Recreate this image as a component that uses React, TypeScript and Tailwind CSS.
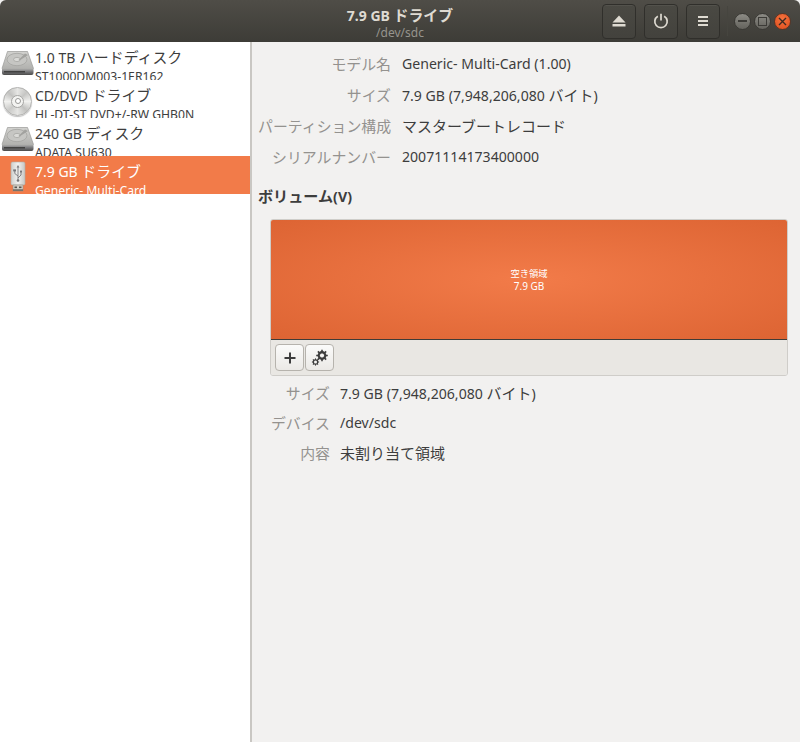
import React from "react";

const FONT = "font-['Noto_Sans','Noto_Sans_CJK_JP',sans-serif]";

function T({ text }: { text: string }) {
  const parts = text.split(/([\u3000-\u9fff]+)/);
  return (
    <>
      {parts.map((p, i) =>
        i % 2 === 1 ? (
          <span key={i} className="text-[1.065em]">
            {p}
          </span>
        ) : (
          <React.Fragment key={i}>{p}</React.Fragment>
        )
      )}
    </>
  );
}

function HddIcon() {
  return (
    <svg width="33" height="32" viewBox="0 0 33 32" className="shrink-0">
      <defs>
        <linearGradient id="hddtop" x1="0" y1="0" x2="0" y2="1">
          <stop offset="0" stopColor="#d2d2cf" />
          <stop offset="1" stopColor="#b2b2af" />
        </linearGradient>
        <linearGradient id="hddfront" x1="0" y1="0" x2="0" y2="1">
          <stop offset="0" stopColor="#b4b4b1" />
          <stop offset="0.5" stopColor="#77777a" />
          <stop offset="1" stopColor="#4a4a49" />
        </linearGradient>
      </defs>
      <path d="M6.5 4.5 H26.5 L32.5 21.5 H1 Z" fill="url(#hddtop)" stroke="#9a9a97" strokeWidth="0.7" />
      <ellipse cx="16" cy="12.5" rx="10" ry="6.2" fill="#c6c6c3" stroke="#a0a09d" strokeWidth="0.7" />
      <ellipse cx="16" cy="12.5" rx="3.4" ry="2.1" fill="#dadad7" stroke="#9a9a97" strokeWidth="0.6" />
      <path d="M24 6.5 L27 8 L18.5 13.5 L17.5 13 Z" fill="#a2a29f" />
      <path d="M1 21.5 H32.5 V26 Q32.5 28 30.5 28 H3 Q1 28 1 26 Z" fill="url(#hddfront)" />
      <rect x="3" y="24" width="21" height="1.5" fill="#2f2f2e" opacity="0.75" />
    </svg>
  );
}

function CdIcon() {
  return (
    <div className="relative w-[33px] h-8 shrink-0 flex items-center justify-center">
      <div className="w-[29px] h-[29px] rounded-full border border-[#b1b1af] bg-[conic-gradient(#e6e6e4,#c6c6c4,#f1f1ef,#c2c2c0,#e6e6e4,#cacac8,#f1f1ef,#c2c2c0,#e6e6e4)] flex items-center justify-center shadow-[0_1px_1px_rgba(0,0,0,0.25)]">
        <div className="w-[13px] h-[13px] rounded-full bg-[#f3f3f1] border border-[#a5a5a3] flex items-center justify-center">
          <div className="w-[6px] h-[6px] rounded-full bg-white border border-[#999997]" />
        </div>
      </div>
    </div>
  );
}

function UsbIcon() {
  return (
    <svg width="33" height="32" viewBox="0 0 33 32" className="shrink-0">
      <defs>
        <linearGradient id="usbbody" x1="0" y1="0" x2="1" y2="0">
          <stop offset="0" stopColor="#cfcfcc" />
          <stop offset="0.5" stopColor="#f2f2f0" />
          <stop offset="1" stopColor="#c6c6c3" />
        </linearGradient>
      </defs>
      <rect x="10" y="1" width="14" height="23" rx="1.5" fill="url(#usbbody)" stroke="#b0aeaa" strokeWidth="0.6" />
      <g stroke="#77777a" strokeWidth="0.9" fill="none">
        <path d="M17 6 V19" />
        <path d="M17 15 L13.8 12.5 V10" />
        <path d="M17 17 L20 14 V11.5" />
      </g>
      <circle cx="17" cy="19.5" r="1.3" fill="#77777a" />
      <rect x="12.2" y="8.4" width="2.8" height="2" fill="#77777a" />
      <rect x="19" y="9.6" width="2" height="2" fill="#77777a" />
      <path d="M17 4 L15.6 6.5 H18.4 Z" fill="#77777a" />
      <rect x="12" y="24" width="10" height="6" fill="#d3cfc6" stroke="#968f84" strokeWidth="0.6" />
      <rect x="13.5" y="25.5" width="2.5" height="1.6" fill="#55554f" />
      <rect x="18" y="25.5" width="2.5" height="1.6" fill="#55554f" />
      <rect x="12" y="28.2" width="10" height="1.8" fill="#77726a" />
    </svg>
  );
}

function HeaderButton({ children }: { children: React.ReactNode }) {
  return (
    <button className="w-[34px] h-[35px] rounded-[4px] border border-[#302f2b] bg-gradient-to-b from-[#4a4943] to-[#43423d] flex items-center justify-center shadow-[inset_0_1px_0_rgba(255,255,255,0.05)]">
      {children}
    </button>
  );
}

function WmButton({ children, close }: { children: React.ReactNode; close?: boolean }) {
  return (
    <div
      className={
        close
          ? "w-[17px] h-[17px] rounded-full border border-[#5a3526] bg-[radial-gradient(circle_at_50%_35%,#f5743f,#dc4b1b)] flex items-center justify-center"
          : "w-[17px] h-[17px] rounded-full border border-[#3a3935] bg-gradient-to-b from-[#8c8b85] to-[#64635d] flex items-center justify-center"
      }
    >
      {children}
    </div>
  );
}

function Header() {
  return (
    <header className="relative h-[42px] shrink-0 rounded-t-[6px] bg-gradient-to-b from-[#4f4d47] to-[#3d3c37] flex items-center justify-end">
      <div className="absolute inset-0 flex flex-col items-center pt-[6px] pointer-events-none">
        <div className="text-[14px] leading-[18px] font-bold text-[#dfdbd2]">
          <T text="7.9 GB ドライブ" />
        </div>
        <div className="text-[12px] leading-[15px] text-[#96948d]">/dev/sdc</div>
      </div>
      <div className="flex items-center gap-[8px]">
        <HeaderButton>
          <svg width="14" height="14" viewBox="0 0 14 14" fill="#dfdbd2">
            <path d="M7 1.5 L13.5 8.5 H0.5 Z" />
            <rect x="0.5" y="10" width="13" height="2.5" />
          </svg>
        </HeaderButton>
        <HeaderButton>
          <svg width="16" height="16" viewBox="0 0 16 16" fill="none" stroke="#dfdbd2" strokeWidth="1.7">
            <path d="M4.8 3.2 A6.2 6.2 0 1 0 11.2 3.2" />
            <path d="M8 0.8 V7.5" />
          </svg>
        </HeaderButton>
        <HeaderButton>
          <svg width="12" height="12" viewBox="0 0 12 12" fill="#dfdbd2">
            <rect x="1" y="1" width="10" height="2" />
            <rect x="1" y="5" width="10" height="2" />
            <rect x="1" y="9" width="10" height="2" />
          </svg>
        </HeaderButton>
        <div className="w-px h-[30px] bg-[#46453f] ml-[-1px]" />
      </div>
      <div className="flex items-center gap-[3px] ml-[6px] mr-[9px]">
        <WmButton>
          <div className="w-[9px] h-[1.5px] bg-[#3c3b37]" />
        </WmButton>
        <WmButton>
          <div className="w-[9px] h-[9px] border-[1.5px] border-[#3c3b37]" />
        </WmButton>
        <WmButton close>
          <svg width="9" height="9" viewBox="0 0 9 9" stroke="#3c2a22" strokeWidth="1.4">
            <path d="M1 1 L8 8 M8 1 L1 8" />
          </svg>
        </WmButton>
      </div>
    </header>
  );
}

function DriveRow({
  icon,
  title,
  sub,
  active,
}: {
  icon: React.ReactNode;
  title: string;
  sub: string;
  active?: boolean;
}) {
  return (
    <div className={`h-[38px] overflow-hidden flex items-start pl-[1px] pt-[5px] ${active ? "bg-[#f27b49] text-white" : "text-[#3d3d3d]"}`}>
      {icon}
      <div className="ml-[1px] min-w-0">
        <div className="text-[14px] leading-[20px] whitespace-nowrap">
          <T text={title} />
        </div>
        <div className="text-[12.2px] leading-[18px] whitespace-nowrap">{sub}</div>
      </div>
    </div>
  );
}

function InfoRow({ label, value, h }: { label: string; value: string; h: string }) {
  return (
    <div className={`flex items-center ${h}`}>
      <div className="w-[133px] text-right text-[14.9px] text-[#94928f] whitespace-nowrap shrink-0">{label}</div>
      <div className="ml-[11px] text-[14.1px] text-[#3d3d3d] whitespace-nowrap">
        <T text={value} />
      </div>
    </div>
  );
}

function DetailRow({ label, value, h }: { label: string; value: string; h: string }) {
  return (
    <div className={`flex items-center ${h}`}>
      <div className="w-[60px] text-right text-[14.9px] text-[#94928f] whitespace-nowrap shrink-0">{label}</div>
      <div className="ml-[10px] text-[14.1px] text-[#3d3d3d] whitespace-nowrap">
        <T text={value} />
      </div>
    </div>
  );
}

function ToolButton({ children }: { children: React.ReactNode }) {
  return (
    <button className="w-[29px] h-[27px] rounded-[4px] border border-[#b6b3ad] bg-gradient-to-b from-[#fbfbfa] to-[#ebe9e6] flex items-center justify-center">
      {children}
    </button>
  );
}

function GearsIcon() {
  const teeth = [0, 45, 90, 135];
  return (
    <svg width="18" height="18" viewBox="0 0 18 18">
      <g transform="translate(11 6.5)" stroke="#3d3d3d" fill="none">
        <circle r="3.4" strokeWidth="2" />
        {teeth.map((a) => (
          <path key={a} d="M0 -5.8 V5.8" strokeWidth="1.6" transform={`rotate(${a})`} />
        ))}
        <circle r="2.1" fill="#f5f4f2" stroke="none" />
      </g>
      <g transform="translate(4.5 13)" stroke="#3d3d3d" fill="none">
        <circle r="2.2" strokeWidth="1.2" />
        {teeth.map((a) => (
          <path key={a} d="M0 -3.6 V3.6" strokeWidth="1" transform={`rotate(${a})`} />
        ))}
        <circle r="1.5" fill="#f5f4f2" stroke="none" />
      </g>
    </svg>
  );
}

export default function App() {
  return (
    <div className={`${FONT} w-[800px] h-[742px] flex flex-col overflow-hidden bg-[#f2f1f0]`}>
      <Header />
      <div className="flex flex-1 min-h-0">
        <aside className="w-[250px] shrink-0 bg-white border-r-2 border-[#c9c7c3] box-content">
          <DriveRow icon={<HddIcon />} title="1.0 TB ハードディスク" sub="ST1000DM003-1ER162" />
          <DriveRow icon={<CdIcon />} title="CD/DVD ドライブ" sub="HL-DT-ST DVD+/-RW GHB0N" />
          <DriveRow icon={<HddIcon />} title="240 GB ディスク" sub="ADATA SU630" />
          <DriveRow icon={<UsbIcon />} title="7.9 GB ドライブ" sub="Generic- Multi-Card" active />
        </aside>
        <main className="flex-1 min-w-0 pl-[6px] pr-[12px] pt-[6px]">
          <InfoRow label="モデル名" value="Generic- Multi-Card (1.00)" h="h-[32px]" />
          <InfoRow label="サイズ" value="7.9 GB (7,948,206,080 バイト)" h="h-[31px]" />
          <InfoRow label="パーティション構成" value="マスターブートレコード" h="h-[31px]" />
          <InfoRow label="シリアルナンバー" value="20071114173400000" h="h-[30px]" />
          <h2 className="mt-[14px] h-[20px] leading-[20px] text-[14.2px] font-bold text-[#3d3d3d]">
            <T text="ボリューム(V)" />
          </h2>
          <section className="ml-[12px] mt-[13px] rounded-[3px] border border-[#cfcdc9] overflow-hidden">
            <div className="h-[119px] bg-[radial-gradient(ellipse_at_center,#f27b49_0%,#dd6433_100%)] border-b border-[#3f3c38] box-content flex flex-col items-center justify-center text-white">
              <div className="text-[9.3px] leading-[12px]">空き領域</div>
              <div className="text-[10px] leading-[12px]">7.9 GB</div>
            </div>
            <div className="h-[35px] bg-[#e9e7e3] flex items-center gap-[1px] pl-[4px]">
              <ToolButton>
                <svg width="12" height="12" viewBox="0 0 12 12" fill="#3d3d3d">
                  <rect x="5" y="0.5" width="2" height="11" />
                  <rect x="0.5" y="5" width="11" height="2" />
                </svg>
              </ToolButton>
              <ToolButton>
                <GearsIcon />
              </ToolButton>
            </div>
          </section>
          <div className="mt-[2px] ml-[12px]">
            <DetailRow label="サイズ" value="7.9 GB (7,948,206,080 バイト)" h="h-[30px]" />
            <DetailRow label="デバイス" value="/dev/sdc" h="h-[30px]" />
            <DetailRow label="内容" value="未割り当て領域" h="h-[31px]" />
          </div>
        </main>
      </div>
    </div>
  );
}
